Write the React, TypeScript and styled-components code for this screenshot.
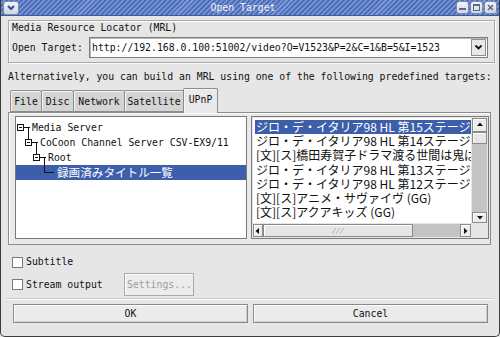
import React from "react";
import styled, { createGlobalStyle } from "styled-components";

const MONO = `"DejaVu Sans Mono", "Liberation Mono", monospace`;
const JP = `"Noto Sans CJK JP", "Noto Sans", sans-serif`;

const Global = createGlobalStyle`
  html, body { margin: 0; padding: 0; background: #e6e6e6; }
  * { box-sizing: border-box; }
`;

const Window = styled.div`
  width: 500px;
  height: 337px;
  display: flex;
  flex-direction: column;
  background: #e6e6e6;
  border: 1px solid #3c3c3c;
  border-top: none;
  border-radius: 0 0 5px 5px;
  font-family: ${MONO};
  font-size: 9.8px;
  color: #111;
  overflow: hidden;
`;

const TitleBar = styled.div`
  height: 16px;
  flex: none;
  display: flex;
  align-items: center;
  padding: 0 2px 0 1px;
  background: repeating-linear-gradient(
    135deg,
    #4e6fb9 0px,
    #4e6fb9 2px,
    #7b97d5 2px,
    #7b97d5 3.5px
  );
  border-bottom: 1px solid #3e5a9c;
`;

const TitleText = styled.div`
  flex: 1;
  text-align: center;
  padding-left: 12px;
  color: #eef1fa;
  line-height: 15px;
`;

const TitleButton = styled.div<{ $wide?: boolean }>`
  width: ${(p) => (p.$wide ? 16 : 13)}px;
  height: ${(p) => (p.$wide ? 14 : 13)}px;
  margin-left: 1px;
  border: 1px solid #7f8bad;
  border-radius: 3px;
  background: linear-gradient(#f2f4fa, #cfd6e7);
  display: flex;
  align-items: center;
  justify-content: center;
`;

const Group = styled.div`
  margin: 4px 4px 0 7px;
  height: 43px;
  flex: none;
  border: 1px solid #a9a9a9;
  box-shadow: inset 1px 1px 0 #fbfbfb, 1px 1px 0 #fbfbfb;
  display: flex;
  flex-direction: column;
`;

const GroupTitle = styled.div`
  padding: 1px 0 0 3px;
  line-height: 12px;
`;

const FieldRow = styled.div`
  margin-top: 3px;
  height: 21px;
  display: flex;
  align-items: center;
  padding: 0 6px 0 3px;
`;

const FieldLabel = styled.div`
  width: 77px;
  flex: none;
`;

const Combo = styled.div`
  flex: 1;
  height: 21px;
  display: flex;
  background: #fff;
  border: 1px solid #7d7d7d;
  box-shadow: inset 1px 1px 0 #b8b8b8;
`;

const ComboText = styled.div`
  flex: 1;
  padding-left: 2px;
  line-height: 19px;
  white-space: nowrap;
  overflow: hidden;
`;

const ComboButton = styled.div`
  width: 15px;
  margin: 1px;
  border: 1px solid #8f8f8f;
  background: #e8e8e8;
  display: flex;
  align-items: center;
  justify-content: center;
`;

const Hint = styled.div`
  margin: 8px 0 0 7px;
  line-height: 12px;
  white-space: nowrap;
`;

const TabBar = styled.div`
  margin: 5px 0 0 10px;
  height: 24px;
  flex: none;
  display: flex;
  align-items: flex-end;
  position: relative;
  z-index: 1;
`;

const Tab = styled.div<{ $w: number; $active?: boolean }>`
  width: ${(p) => p.$w}px;
  height: ${(p) => (p.$active ? 25 : 22)}px;
  margin-left: -1px;
  margin-bottom: ${(p) => (p.$active ? -1 : 0)}px;
  border: 1px solid #8c8c8c;
  border-bottom: ${(p) => (p.$active ? "none" : "1px solid #8c8c8c")};
  border-radius: 2px 2px 0 0;
  background: ${(p) => (p.$active ? "#e9e9e9" : "#d4d4d4")};
  box-shadow: inset 1px 1px 0 #f6f6f6;
  text-align: center;
  line-height: ${(p) => (p.$active ? 22 : 21)}px;
`;

const Panel = styled.div`
  margin: 0 8px 0 7px;
  height: 133px;
  flex: none;
  border: 1px solid #8c8c8c;
  box-shadow: inset 1px 1px 0 #fbfbfb;
  background: #e9e9e9;
  padding: 3px 1px 5px 6px;
  display: flex;
  gap: 4px;
`;

const Tree = styled.div`
  width: 232px;
  height: 123px;
  flex: none;
  border: 1px solid #7a7a7a;
  background: #fff;
  padding-top: 3px;
  overflow: hidden;
`;

const TreeRow = styled.div<{ $selected?: boolean }>`
  height: 15px;
  display: flex;
  align-items: center;
  background: ${(p) => (p.$selected ? "#3d5fab" : "transparent")};
  color: ${(p) => (p.$selected ? "#fff" : "#111")};
  white-space: nowrap;
`;

const TreeLabel = styled.span<{ $jp?: boolean }>`
  font-family: ${(p) => (p.$jp ? JP : MONO)};
  font-size: ${(p) => (p.$jp ? 11.6 : 9.8)}px;
  line-height: 15px;
`;

const ListBox = styled.div`
  flex: 1;
  height: 123px;
  border: 1px solid #7a7a7a;
  padding: 1px;
  background: #e6e6e6;
  display: grid;
  grid-template-columns: 1fr 16px;
  grid-template-rows: 1fr 14px;
`;

const ListArea = styled.div`
  background: #fff;
  padding: 2px 0 0 2px;
  overflow: hidden;
`;

const ListRow = styled.div<{ $selected?: boolean }>`
  height: 14.2px;
  line-height: 14.2px;
  font-family: ${JP};
  font-size: 12px;
  padding-left: 1px;
  white-space: nowrap;
  overflow: hidden;
  background: ${(p) => (p.$selected ? "#3d5fab" : "transparent")};
  color: ${(p) => (p.$selected ? "#fff" : "#111")};
`;

const VScroll = styled.div`
  display: flex;
  flex-direction: column;
  background: #c4c4c4;
  margin-left: 1px;
`;

const HScroll = styled.div`
  display: flex;
  background: #c4c4c4;
  margin-top: 1px;
`;

const ArrowBtn = styled.div<{ $size: number; $vertical?: boolean }>`
  flex: none;
  ${(p) => (p.$vertical ? `height: ${p.$size}px;` : `width: ${p.$size}px;`)}
  border: 1px solid #8a8a8a;
  background: #ececec;
  box-shadow: inset 1px 1px 0 #fff;
  display: flex;
  align-items: center;
  justify-content: center;
`;

const Thumb = styled.div<{ $size: number; $vertical?: boolean }>`
  flex: none;
  ${(p) => (p.$vertical ? `height: ${p.$size}px;` : `width: ${p.$size}px;`)}
  border: 1px solid #8a8a8a;
  background: #e6e6e6;
  box-shadow: inset 1px 1px 0 #fff;
  display: flex;
  align-items: center;
  justify-content: center;
`;

const Trough = styled.div`
  flex: 1;
`;

const Corner = styled.div`
  background: #e6e6e6;
`;

const CheckRow = styled.div<{ $gap: number; $h: number }>`
  margin-top: ${(p) => p.$gap}px;
  height: ${(p) => p.$h}px;
  flex: none;
  display: flex;
  align-items: center;
  padding-left: 11px;
`;

const CheckBox = styled.div`
  width: 11px;
  height: 11px;
  flex: none;
  border: 1px solid #7a7a7a;
  background: #fff;
`;

const CheckText = styled.div<{ $w?: number }>`
  margin-left: 3px;
  ${(p) => (p.$w ? `width: ${p.$w}px;` : "")}
  line-height: 12px;
`;

const SmallButton = styled.div`
  width: 70px;
  height: 23px;
  border: 1px solid #a9a9a9;
  background: #ececec;
  box-shadow: inset 1px 1px 0 #fff;
  color: #9c9c9c;
  line-height: 21px;
  padding-left: 2px;
`;

const Separator = styled.div`
  margin: 2px 5px 0 5px;
  height: 2px;
  flex: none;
  border-top: 1px solid #cdcdcd;
  border-bottom: 1px solid #f8f8f8;
`;

const ButtonRow = styled.div`
  margin-top: 4px;
  height: 19px;
  flex: none;
  display: grid;
  grid-template-columns: 1fr 1fr;
  gap: 5px;
  padding: 0 11px 0 12px;
`;

const PushButton = styled.div`
  border: 1px solid #8a8a8a;
  background: #ebebeb;
  box-shadow: inset 1px 1px 0 #fff, inset -1px -1px 0 #cfcfcf;
  text-align: center;
  line-height: 17px;
`;

const Tri = ({ dir }: { dir: "up" | "down" | "left" | "right" }) => {
  const pts = {
    up: "1,5 4,1.5 7,5",
    down: "1,2 4,5.5 7,2",
    left: "5,1 1.5,4 5,7",
    right: "2,1 5.5,4 2,7",
  }[dir];
  return (
    <svg width="8" height="8" viewBox="0 0 8 8">
      <polygon points={pts} fill="#111" />
    </svg>
  );
};

type Node = { level: number; label: string; kind: "open" | "leaf"; jp?: boolean; selected?: boolean };

const nodes: Node[] = [
  { level: 0, label: "Media Server", kind: "open" },
  { level: 1, label: "CoCoon Channel Server CSV-EX9/11", kind: "open" },
  { level: 2, label: "Root", kind: "open" },
  { level: 3, label: "録画済みタイトル一覧", kind: "leaf", jp: true, selected: true },
];

const TreePrefix = ({ n }: { n: Node }) => {
  const L = n.level;
  const w = n.kind === "leaf" ? 41 : 16 + 8 * L;
  if (n.kind === "leaf") {
    const x = 12.5 + 8 * (L - 1);
    return (
      <svg width={w} height="15" style={{ flex: "none" }}>
        <path d={`M${x} 0 V7.5 H38`} stroke="#111" strokeWidth="1" fill="none" />
      </svg>
    );
  }
  const bx = 1.5 + 8 * L;
  return (
    <svg width={w} height="15" style={{ flex: "none" }}>
      {L > 0 && <path d={`M${bx + 3} 0 V4.5`} stroke="#111" fill="none" />}
      <rect x={bx} y="4.5" width="6" height="6" fill="#fff" stroke="#111" />
      <path d={`M${bx + 1.5} 7.5 H${bx + 4.5}`} stroke="#111" />
      <path d={`M${bx + 6} 7.5 H${bx + 12.5} M${bx + 11} 7.5 V15`} stroke="#111" fill="none" />
    </svg>
  );
};

const listItems = [
  "ジロ・デ・イタリア98 HL 第15ステージ",
  "ジロ・デ・イタリア98 HL 第14ステージ",
  "[文][ス]橋田寿賀子ドラマ渡る世間は鬼ばかり",
  "ジロ・デ・イタリア98 HL 第13ステージ",
  "ジロ・デ・イタリア98 HL 第12ステージ",
  "[文][ス]アニメ・サヴァイヴ (GG)",
  "[文][ス]アクアキッズ (GG)",
];

const tabs = [
  { label: "File", w: 32 },
  { label: "Disc", w: 33 },
  { label: "Network", w: 52 },
  { label: "Satellite", w: 60 },
  { label: "UPnP", w: 35, active: true },
];

export default function App() {
  return (
    <>
      <Global />
      <Window>
        <TitleBar>
          <TitleButton $wide>
            <svg width="10" height="8" viewBox="0 0 10 8">
              <polyline points="2,2 5,5 8,2" stroke="#33509a" strokeWidth="2" fill="none" />
            </svg>
          </TitleButton>
          <TitleText>Open Target</TitleText>
          <TitleButton>
            <svg width="9" height="9" viewBox="0 0 9 9">
              <rect x="1" y="5" width="7" height="2" fill="#5d6784" />
            </svg>
          </TitleButton>
          <TitleButton>
            <svg width="9" height="9" viewBox="0 0 9 9">
              <rect x="1.5" y="1.5" width="6" height="6" fill="none" stroke="#5d6784" />
              <rect x="1" y="1" width="7" height="2" fill="#5d6784" />
            </svg>
          </TitleButton>
          <TitleButton>
            <svg width="9" height="9" viewBox="0 0 9 9">
              <path d="M2 2 L7 7 M7 2 L2 7" stroke="#5d6784" strokeWidth="1.6" />
            </svg>
          </TitleButton>
        </TitleBar>

        <Group>
          <GroupTitle>Media Resource Locator (MRL)</GroupTitle>
          <FieldRow>
            <FieldLabel>Open Target:</FieldLabel>
            <Combo>
              <ComboText>http://192.168.0.100:51002/video?O=V1523&amp;P=2&amp;C=1&amp;B=5&amp;I=1523</ComboText>
              <ComboButton>
                <svg width="9" height="7" viewBox="0 0 9 7">
                  <polyline points="1.5,1.5 4.5,4.5 7.5,1.5" stroke="#111" strokeWidth="1.8" fill="none" />
                </svg>
              </ComboButton>
            </Combo>
          </FieldRow>
        </Group>

        <Hint>Alternatively, you can build an MRL using one of the following predefined targets:</Hint>

        <TabBar>
          {tabs.map((t) => (
            <Tab key={t.label} $w={t.w} $active={t.active}>
              {t.label}
            </Tab>
          ))}
        </TabBar>

        <Panel>
          <Tree>
            {nodes.map((n) => (
              <TreeRow key={n.label} $selected={n.selected}>
                <TreePrefix n={n} />
                <TreeLabel $jp={n.jp}>{n.label}</TreeLabel>
              </TreeRow>
            ))}
          </Tree>
          <ListBox>
            <ListArea>
              {listItems.map((t, i) => (
                <ListRow key={i} $selected={i === 0}>
                  {t}
                </ListRow>
              ))}
            </ListArea>
            <VScroll>
              <ArrowBtn $vertical $size={14}>
                <Tri dir="up" />
              </ArrowBtn>
              <Thumb $vertical $size={12} />
              <Trough />
              <ArrowBtn $vertical $size={11}>
                <Tri dir="down" />
              </ArrowBtn>
            </VScroll>
            <HScroll>
              <ArrowBtn $size={10}>
                <Tri dir="left" />
              </ArrowBtn>
              <Thumb $size={150}>
                <svg width="12" height="6" viewBox="0 0 12 6">
                  <path d="M0 6 L4 0 M4 6 L8 0 M8 6 L12 0" stroke="#b4b4b4" strokeWidth="1" />
                </svg>
              </Thumb>
              <Trough />
              <ArrowBtn $size={11}>
                <Tri dir="right" />
              </ArrowBtn>
            </HScroll>
            <Corner />
          </ListBox>
        </Panel>

        <CheckRow $gap={10} $h={14}>
          <CheckBox />
          <CheckText>Subtitle</CheckText>
        </CheckRow>
        <CheckRow $gap={4} $h={23}>
          <CheckBox />
          <CheckText $w={98}>Stream output</CheckText>
          <SmallButton>Settings...</SmallButton>
        </CheckRow>

        <Separator />

        <ButtonRow>
          <PushButton>OK</PushButton>
          <PushButton>Cancel</PushButton>
        </ButtonRow>
      </Window>
    </>
  );
}
